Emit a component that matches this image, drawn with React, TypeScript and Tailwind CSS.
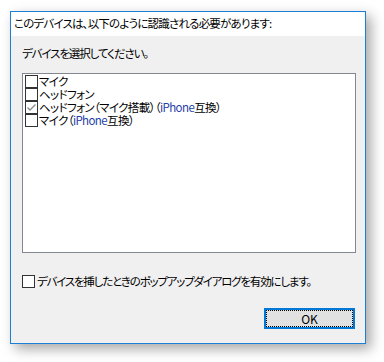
import React from "react";

const font = { fontFamily: '"Noto Sans CJK JP", "Noto Sans", sans-serif' };

function Box({ checked = false }: { checked?: boolean }) {
  return (
    <span className="inline-flex h-[13px] w-[13px] shrink-0 items-center justify-center border border-[#333333] bg-white">
      {checked && (
        <svg width="11" height="11" viewBox="0 0 11 11">
          <polyline points="1.5,5.5 4,8 9.5,2.5" fill="none" stroke="#8a8a8a" strokeWidth="1.3" />
        </svg>
      )}
    </span>
  );
}

function Row({ checked, children }: { checked?: boolean; children: React.ReactNode }) {
  return (
    <div className="flex h-[13px] items-center gap-[1px] text-[11.5px] leading-[13px] tracking-[-0.6px] text-black">
      <Box checked={checked} />
      <span className="whitespace-nowrap">{children}</span>
    </div>
  );
}

const Blue = ({ children }: { children: React.ReactNode }) => (
  <span className="text-[#1f3fa8]">{children}</span>
);

export default function App() {
  return (
    <div className="h-[362px] w-[384px] overflow-hidden bg-white pl-[10px] pt-[11px] [font-feature-settings:'palt']" style={font}>
      <div className="flex h-[333px] w-[356px] flex-col border border-[#1c7fd6] bg-[#f0f0f0] shadow-[5px_5px_12px_rgba(0,0,0,0.35)]">
        <div className="flex h-[24px] items-center bg-white pl-[3px] text-[11.5px] tracking-[-0.8px] text-black">
          このデバイスは、以下のように認識される必要があります:
        </div>
        <div className="flex flex-1 flex-col pl-[11px] pr-[10px]">
          <div className="mt-[9px] h-[16px] text-[11.5px] leading-[16px] tracking-[-1.1px] text-black">デバイスを選択してください。</div>
          <div className="mt-[12px] flex h-[180px] w-[334px] flex-col border border-[#828790] bg-white pl-[2px] pt-[1px]">
            <Row>マイク</Row>
            <Row>ヘッドフォン</Row>
            <Row checked>
              ヘッドフォン（マイク搭載）（<Blue>iPhone</Blue>互換）
            </Row>
            <Row>
              マイク（<Blue>iPhone</Blue>互換）
            </Row>
          </div>
          <div className="mt-[22px] flex h-[13px] items-center gap-[2px] text-[11.5px] leading-[13px] tracking-[-1.2px] text-black">
            <Box />
            <span className="whitespace-nowrap">デバイスを挿したときのポップアップダイアログを有効にします。</span>
          </div>
          <div className="mt-[20px] flex justify-end">
            <button className="flex h-[21px] w-[91px] items-center justify-center border-2 border-[#0078d7] bg-[#e1e1e1] p-0">
              <span className="flex h-full w-full items-center justify-center border border-dotted border-black text-[12px] leading-none text-black">
                OK
              </span>
            </button>
          </div>
        </div>
      </div>
    </div>
  );
}
